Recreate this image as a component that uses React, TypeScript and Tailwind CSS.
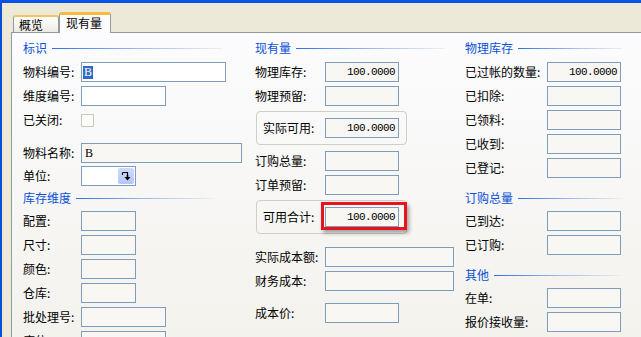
import React from "react";

const FONT = "font-['Noto_Sans_CJK_SC','Noto_Sans',sans-serif]";

function Header({ t, w, h = "h-[24px]" }: { t: string; w: string; h?: string }) {
  return (
    <div className={`${w} ${h} flex items-center gap-[5px] shrink-0`}>
      <span className="text-[12px] leading-none text-[#0B4FD6] whitespace-nowrap">{t}</span>
      <div className="flex-1 h-px bg-gradient-to-r from-[#2F6EE4] via-[#9DB8EA] to-[#F0EFEA]" />
    </div>
  );
}

function Box({
  w,
  white,
  left,
  children,
}: {
  w: string;
  white?: boolean;
  left?: boolean;
  children?: React.ReactNode;
}) {
  return (
    <div
      className={`${w} h-[20px] shrink-0 border border-[#7F9DB9] ${white ? "bg-white" : "bg-[#F8F7F4]"} flex items-center ${left ? "justify-start" : "justify-end pr-[3px]"}`}
    >
      {children}
    </div>
  );
}

function Num({ v }: { v: string }) {
  return (
    <span className="font-['Liberation_Mono',monospace] text-[11px] tracking-[-0.6px] leading-none text-black">
      {v}
    </span>
  );
}

function Row({
  label,
  lw,
  h = "h-[24px]",
  children,
}: {
  label: string;
  lw: string;
  h?: string;
  children?: React.ReactNode;
}) {
  return (
    <div className={`flex items-center ${h} shrink-0`}>
      <span className={`${lw} shrink-0 text-[12px] leading-none text-black whitespace-nowrap`}>{label}</span>
      {children}
    </div>
  );
}

function GroupBox({ label, value, red }: { label: string; value: string; red?: boolean }) {
  return (
    <div className="ml-[1px] w-[151px] h-[34px] shrink-0 border border-[#D0CFC4] rounded-[4px] flex items-center pl-[6px]">
      <span className="w-[62px] shrink-0 text-[12px] leading-none text-black whitespace-nowrap">{label}</span>
      <div className="relative">
        <Box w="w-[74px]">
          <Num v={value} />
        </Box>
        {red && (
          <div className="absolute left-[-4px] top-[-5px] w-[86px] h-[28px] border-[3px] border-[#E8141B] shadow-[2px_3px_4px_rgba(0,0,0,0.35)]" />
        )}
      </div>
    </div>
  );
}

function DropIcon() {
  return (
    <svg width="10" height="11" viewBox="0 0 10 11">
      <path d="M1.5 1.5 H6.5 V4.5" fill="none" stroke="#000" strokeWidth="1.2" />
      <path d="M1.5 1.5 V4" fill="none" stroke="#000" strokeWidth="1.2" />
      <path d="M6.5 4 V6" stroke="#000" strokeWidth="1.6" />
      <path d="M3.5 6 H9.5 L6.5 9.5 Z" fill="#000" />
    </svg>
  );
}

export default function App() {
  return (
    <div className={`w-[641px] h-[337px] overflow-hidden flex flex-col bg-[#ECE9D8] ${FONT}`}>
      <div className="h-[3px] shrink-0 bg-gradient-to-b from-[#0058EE] to-[#0A4ED6]" />
      <div className="flex flex-1 min-h-0">
        <div className="w-[2px] shrink-0 bg-[#0A4ED6]" />
        <div className="flex-1 flex flex-col pl-[9px] min-w-0">
          {/* tabs */}
          <div className="h-[29px] shrink-0 flex items-end pl-[2px]">
            <div className="w-[46px] h-[17px] border border-b-0 border-[#919B9C] border-t-2 border-t-[#F7C45A] rounded-t-[3px] bg-gradient-to-b from-[#FEFEFE] to-[#ECEBE5] pl-[5px] flex items-center text-[12px] leading-none text-black">
              概览
            </div>
            <div className="relative z-10 -mb-px w-[52px] h-[21px] border border-b-0 border-[#919B9C] border-t-[3px] border-t-[#F9BB3F] rounded-t-[3px] bg-[#FCFCFE] pl-[6px] pb-[2px] flex items-center text-[12px] leading-none text-black">
              现有量
            </div>
          </div>
          {/* panel */}
          <div className="flex-1 min-h-0 border-l border-t border-[#919B9C] bg-gradient-to-b from-[#FCFCFE] to-[#F3F2ED] flex pl-[11px] pt-[3px]">
            {/* column 1 */}
            <div className="w-[232px] shrink-0 flex flex-col">
              <Header t="标识" w="w-[199px]" />
              <Row label="物料编号:" lw="w-[58px]">
                <Box w="w-[145px]" white left>
                  <span className="ml-[1px] px-[1px] bg-[#316AC5] text-white font-['Liberation_Serif',serif] text-[12px] leading-[13px]">
                    B
                  </span>
                </Box>
              </Row>
              <Row label="维度编号:" lw="w-[58px]">
                <Box w="w-[85px]" white />
              </Row>
              <Row label="已关闭:" lw="w-[58px]">
                <div className="w-[13px] h-[13px] border border-[#CAC8BB] bg-[#FBFBF9]" />
              </Row>
              <div className="h-[9px] shrink-0" />
              <Row label="物料名称:" lw="w-[58px]">
                <Box w="w-[161px]" left>
                  <span className="ml-[3px] font-['Liberation_Serif',serif] text-[12px] leading-none text-black">B</span>
                </Box>
              </Row>
              <Row label="单位:" lw="w-[58px]" h="h-[22px]">
                <div className="w-[55px] h-[20px] border border-[#7F9DB9] bg-white flex justify-end p-px">
                  <div className="w-[16px] h-full bg-gradient-to-b from-[#CCDAFC] to-[#B4C8F6] rounded-[2px] flex items-center justify-center">
                    <DropIcon />
                  </div>
                </div>
              </Row>
              <Header t="库存维度" w="w-[190px]" h="h-[22px]" />
              <Row label="配置:" lw="w-[58px]">
                <Box w="w-[55px]" />
              </Row>
              <Row label="尺寸:" lw="w-[58px]">
                <Box w="w-[55px]" />
              </Row>
              <Row label="颜色:" lw="w-[58px]">
                <Box w="w-[55px]" />
              </Row>
              <Row label="仓库:" lw="w-[58px]">
                <Box w="w-[55px]" />
              </Row>
              <Row label="批处理号:" lw="w-[58px]">
                <Box w="w-[85px]" />
              </Row>
              <Row label="库位:" lw="w-[58px]">
                <Box w="w-[85px]" />
              </Row>
            </div>

            {/* column 2 */}
            <div className="w-[210px] shrink-0 flex flex-col">
              <Header t="现有量" w="w-[190px]" />
              <Row label="物理库存:" lw="w-[70px]">
                <Box w="w-[74px]">
                  <Num v="100.0000" />
                </Box>
              </Row>
              <Row label="物理预留:" lw="w-[70px]">
                <Box w="w-[74px]" />
              </Row>
              <div className="h-[3px] shrink-0" />
              <GroupBox label="实际可用:" value="100.0000" />
              <div className="h-[4px] shrink-0" />
              <Row label="订购总量:" lw="w-[70px]">
                <Box w="w-[74px]" />
              </Row>
              <Row label="订单预留:" lw="w-[70px]">
                <Box w="w-[74px]" />
              </Row>
              <div className="h-[3px] shrink-0" />
              <GroupBox label="可用合计:" value="100.0000" red />
              <div className="h-[11px] shrink-0" />
              <Row label="实际成本额:" lw="w-[70px]">
                <Box w="w-[129px]" />
              </Row>
              <Row label="财务成本:" lw="w-[70px]">
                <Box w="w-[129px]" />
              </Row>
              <div className="h-[8px] shrink-0" />
              <Row label="成本价:" lw="w-[70px]">
                <Box w="w-[74px]" />
              </Row>
            </div>

            {/* column 3 */}
            <div className="flex-1 flex flex-col">
              <Header t="物理库存" w="w-[157px]" />
              <Row label="已过帐的数量:" lw="w-[82px]">
                <Box w="w-[74px]">
                  <Num v="100.0000" />
                </Box>
              </Row>
              <Row label="已扣除:" lw="w-[82px]">
                <Box w="w-[74px]" />
              </Row>
              <Row label="已领料:" lw="w-[82px]">
                <Box w="w-[74px]" />
              </Row>
              <Row label="已收到:" lw="w-[82px]">
                <Box w="w-[74px]" />
              </Row>
              <Row label="已登记:" lw="w-[82px]">
                <Box w="w-[74px]" />
              </Row>
              <div className="h-[7px] shrink-0" />
              <Header t="订购总量" w="w-[157px]" h="h-[22px]" />
              <Row label="已到达:" lw="w-[82px]">
                <Box w="w-[74px]" />
              </Row>
              <Row label="已订购:" lw="w-[82px]">
                <Box w="w-[74px]" />
              </Row>
              <div className="h-[7px] shrink-0" />
              <Header t="其他" w="w-[157px]" h="h-[22px]" />
              <Row label="在单:" lw="w-[82px]">
                <Box w="w-[74px]" />
              </Row>
              <Row label="报价接收量:" lw="w-[82px]">
                <Box w="w-[74px]" />
              </Row>
            </div>
          </div>
        </div>
      </div>
    </div>
  );
}
